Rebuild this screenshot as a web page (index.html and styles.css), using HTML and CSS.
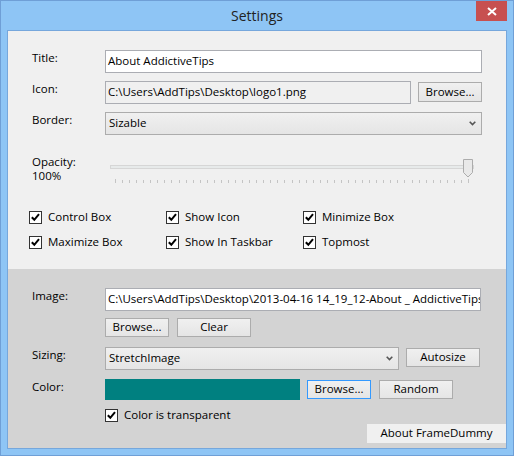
FILE: index.html
```html
<!DOCTYPE html>
<html>
<head>
<meta charset="utf-8">
<title>Settings</title>
<link rel="stylesheet" href="styles.css">
</head>
<body>
<div class="window">
  <div class="titlebar">
    <div></div>
    <div class="title">Settings</div>
    <div class="close">
      <svg width="31" height="20" viewBox="0 0 31 20"><path d="M12 7 L20 14 M20 7 L12 14" stroke="#fff" stroke-width="2" fill="none"/></svg>
    </div>
  </div>
  <div class="frame-body">
    <div class="client">
      <div class="section top">
        <div class="row">
          <div class="label">Title:</div>
          <div class="textbox w377">About AddictiveTips</div>
        </div>
        <div class="row">
          <div class="label">Icon:</div>
          <div class="textbox readonly w306">C:\Users\AddTips\Desktop\logo1.png</div>
          <div class="button w64 h20 gap7 mt1">Browse...</div>
        </div>
        <div class="row">
          <div class="label">Border:</div>
          <div class="combo w377"><span>Sizable</span>
            <svg class="chev" width="7" height="5" viewBox="0 0 7 5"><path d="M0.7 0.7 L3.5 3.5 L6.3 0.7" stroke="#555" stroke-width="1.6" fill="none"/></svg>
          </div>
        </div>
        <div class="opacity-row">
          <div class="label two">Opacity:<br>100%</div>
          <svg class="slider" width="377" height="30" viewBox="0 0 377 30">
            <rect x="5.5" y="10.5" width="363" height="3" fill="#e7eaea" stroke="#d6d6d6"/>
            <g id="ticks" stroke="#c4c4c4" stroke-width="1"></g>
            <path d="M358.5 4.5 H367.5 V17.5 L363 22 L358.5 17.5 Z" fill="#e9e9e9" stroke="#acacac"/>
          </svg>
        </div>
        <div class="checks">
          <div class="check"><svg class="cb" width="13" height="13" viewBox="0 0 13 13"><rect x="0.5" y="0.5" width="12" height="12" fill="#fff" stroke="#333"/><path d="M2.8 6.3 L5.3 8.8 L10 3.2" fill="none" stroke="#000" stroke-width="2"/></svg><span>Control Box</span></div>
          <div class="check"><svg class="cb" width="13" height="13" viewBox="0 0 13 13"><rect x="0.5" y="0.5" width="12" height="12" fill="#fff" stroke="#333"/><path d="M2.8 6.3 L5.3 8.8 L10 3.2" fill="none" stroke="#000" stroke-width="2"/></svg><span>Show Icon</span></div>
          <div class="check"><svg class="cb" width="13" height="13" viewBox="0 0 13 13"><rect x="0.5" y="0.5" width="12" height="12" fill="#fff" stroke="#333"/><path d="M2.8 6.3 L5.3 8.8 L10 3.2" fill="none" stroke="#000" stroke-width="2"/></svg><span>Minimize Box</span></div>
          <div class="check"><svg class="cb" width="13" height="13" viewBox="0 0 13 13"><rect x="0.5" y="0.5" width="12" height="12" fill="#fff" stroke="#333"/><path d="M2.8 6.3 L5.3 8.8 L10 3.2" fill="none" stroke="#000" stroke-width="2"/></svg><span>Maximize Box</span></div>
          <div class="check"><svg class="cb" width="13" height="13" viewBox="0 0 13 13"><rect x="0.5" y="0.5" width="12" height="12" fill="#fff" stroke="#333"/><path d="M2.8 6.3 L5.3 8.8 L10 3.2" fill="none" stroke="#000" stroke-width="2"/></svg><span>Show In Taskbar</span></div>
          <div class="check"><svg class="cb" width="13" height="13" viewBox="0 0 13 13"><rect x="0.5" y="0.5" width="12" height="12" fill="#fff" stroke="#333"/><path d="M2.8 6.3 L5.3 8.8 L10 3.2" fill="none" stroke="#000" stroke-width="2"/></svg><span>Topmost</span></div>
        </div>
      </div>
      <div class="section bottom">
        <div class="row">
          <div class="label">Image:</div>
          <div class="textbox w376">C:\Users\AddTips\Desktop\2013-04-16 14_19_12-About _ AddictiveTips</div>
        </div>
        <div class="btn-row">
          <div class="button w64 h19">Browse...</div>
          <div class="button w74 h19 gap8">Clear</div>
        </div>
        <div class="row sizing">
          <div class="label">Sizing:</div>
          <div class="combo w294"><span>StretchImage</span>
            <svg class="chev" width="7" height="5" viewBox="0 0 7 5"><path d="M0.7 0.7 L3.5 3.5 L6.3 0.7" stroke="#555" stroke-width="1.6" fill="none"/></svg>
          </div>
          <div class="button w74 h19 gap7 mt1">Autosize</div>
        </div>
        <div class="row color">
          <div class="label">Color:</div>
          <div class="swatch"></div>
          <div class="button focused w64 h19 gap7 mt1">Browse...</div>
          <div class="button w74 h19 gap8 mt1">Random</div>
        </div>
        <div class="check single"><svg class="cb" width="13" height="13" viewBox="0 0 13 13"><rect x="0.5" y="0.5" width="12" height="12" fill="#fff" stroke="#333"/><path d="M2.8 6.3 L5.3 8.8 L10 3.2" fill="none" stroke="#000" stroke-width="2"/></svg><span>Color is transparent</span></div>
        <div class="about-row">
          <div class="about">About FrameDummy</div>
        </div>
      </div>
    </div>
  </div>
</div>
<script>
  (function () {
    var g = document.getElementById('ticks');
    var ns = 'http://www.w3.org/2000/svg';
    for (var i = 0; i <= 50; i++) {
      var x = Math.round(10 + i * 7.06) + 0.5;
      var l = document.createElementNS(ns, 'line');
      l.setAttribute('x1', x); l.setAttribute('x2', x);
      l.setAttribute('y1', (i === 0 || i === 50) ? 24 : 25);
      l.setAttribute('y2', 28);
      g.appendChild(l);
    }
  })();
</script>
</body>
</html>
```

FILE: styles.css
```css
* { box-sizing: border-box; }
html, body { margin: 0; padding: 0; }
body {
  width: 514px;
  height: 456px;
  overflow: hidden;
  font-family: "Open Sans", "Noto Sans", "DejaVu Sans", sans-serif;
  font-size: 11.5px;
  color: #000;
  background: #fff;
}
.window {
  width: 514px;
  height: 456px;
  background: #8ec5f5;
  border: 1px solid #6f9fd6;
  display: flex;
  flex-direction: column;
}
.titlebar {
  height: 29px;
  flex: none;
  display: grid;
  grid-template-columns: 1fr auto 1fr;
}
.title {
  font-size: 14px;
  line-height: 29px;
  color: #222;
}
.close {
  justify-self: end;
  align-self: start;
  width: 31px;
  height: 20px;
  margin-right: 6px;
  background: #c75050;
}
.close svg { display: block; }
.frame-body {
  flex: 1;
  display: flex;
  padding: 0 6px 6px 6px;
}
.client {
  flex: 1;
  border: 1px solid #76a7dc;
  display: flex;
  flex-direction: column;
}
.section { padding-top: 19px; }
.top { height: 238px; background: #f0f0f0; }
.bottom { flex: 1; background: #d3d3d3; }

.row { display: flex; align-items: flex-start; margin-bottom: 8px; }
.label {
  width: 97px;
  flex: none;
  padding-left: 24px;
  line-height: 15px;
  white-space: nowrap;
}
.label.two { line-height: 14px; padding-top: 0; }

.textbox {
  height: 23px;
  border: 1px solid #abadb3;
  background: #fff;
  padding: 0 2px 0 2px;
  line-height: 19px;
  white-space: nowrap;
  overflow: hidden;
}
.textbox.readonly { background: #f0f0f0; }
.w377 { width: 377px; }
.w376 { width: 376px; }
.w306 { width: 306px; }
.w294 { width: 294px; }
.w64 { width: 64px; }
.w74 { width: 74px; }
.h19 { height: 19px; }
.h20 { height: 20px; }
.gap7 { margin-left: 7px; }
.gap8 { margin-left: 8px; }
.mt1 { margin-top: 1px; }

.button {
  flex: none;
  border: 1px solid #acacac;
  background: linear-gradient(#f0f0f0, #e5e5e5);
  text-align: center;
  line-height: 16px;
  white-space: nowrap;
}
.button.h20 { line-height: 17px; }
.button.focused { border-color: #3399ff; }

.combo {
  height: 23px;
  border: 1px solid #acacac;
  background: linear-gradient(#f0f0f0, #e5e5e5);
  display: flex;
  align-items: flex-start;
  justify-content: space-between;
  padding: 0 5px 0 3px;
  line-height: 19px;
}
.chev { margin-top: 8px; }

.opacity-row {
  display: flex;
  align-items: flex-start;
  margin-top: 20px;
}
.slider { display: block; }

.checks {
  margin-top: 26px;
  padding-left: 21px;
  display: grid;
  grid-template-columns: 137px 137px 137px;
  row-gap: 12px;
}
.check {
  display: flex;
  align-items: flex-start;
  gap: 6px;
  height: 13px;
}
.check span { line-height: 15px; margin-top: -2px; white-space: nowrap; }
.cb { display: block; flex: none; }

.btn-row {
  display: flex;
  padding-left: 97px;
  margin-top: -1px;
  margin-bottom: 10px;
}
.sizing { margin-bottom: 9px; }
.color { margin-bottom: 9px; }
.swatch {
  width: 195px;
  height: 21px;
  background: #008080;
}
.check.single { margin-left: 97px; }
.about-row {
  display: flex;
  justify-content: flex-end;
  margin-top: 2px;
}
.about {
  width: 139px;
  height: 19px;
  background: #f0f0f0;
  text-align: center;
  line-height: 18px;
  white-space: nowrap;
}
```
